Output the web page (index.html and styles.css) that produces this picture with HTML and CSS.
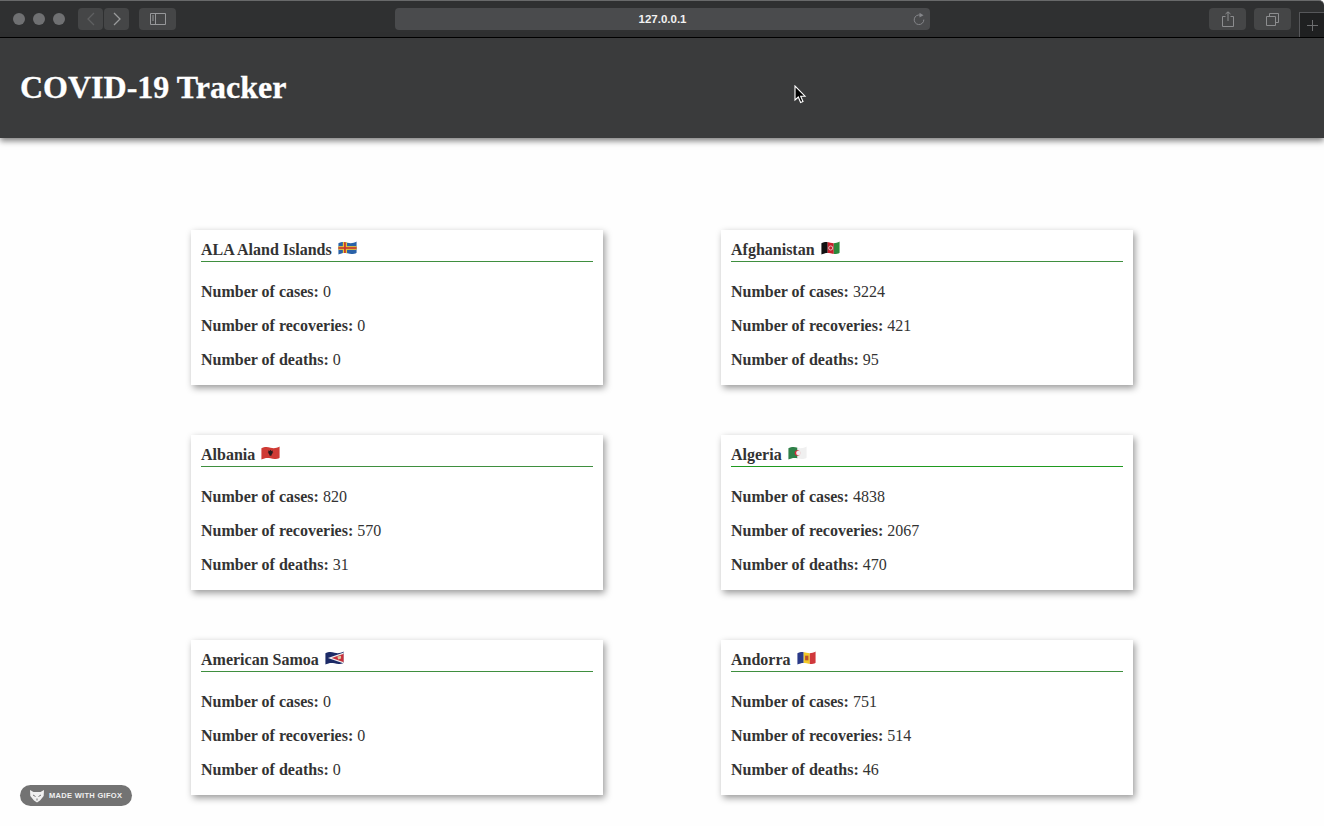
FILE: index.html
```html
<!DOCTYPE html>
<html lang="en">
<head>
<meta charset="UTF-8">
<meta name="viewport" content="width=device-width, initial-scale=1.0">
<title>COVID-19 Tracker</title>
<link rel="stylesheet" href="styles.css">
</head>
<body>
  <svg class="defs" width="0" height="0">
    <clipPath id="wave">
      <path d="M0 2.500C4 .5 7 1 10 1.800S16 2.600 20 .5V12.500C16 14.600 13 14 10 13.200S4 12.500 0 14.500Z"/>
    </clipPath>
  </svg>

  <div class="toolbar">
    <div class="lights">
      <span class="light"></span>
      <span class="light"></span>
      <span class="light"></span>
    </div>
    <div class="nav-btns">
      <span class="btn btn-nav">
        <svg width="10" height="14" viewBox="0 0 10 14"><path d="M8 1L2 7l6 6" fill="none" stroke="#5f6061" stroke-width="1.3"/></svg>
      </span>
      <span class="btn btn-nav">
        <svg width="10" height="14" viewBox="0 0 10 14"><path d="M2 1l6 6-6 6" fill="none" stroke="#9a9b9c" stroke-width="1.3"/></svg>
      </span>
    </div>
    <span class="btn btn-wide">
      <svg width="16" height="12" viewBox="0 0 16 12"><path d="M.5.5h15v11H.5zM5.5.5v11" fill="none" stroke="#97989a"/><path d="M2 3h2M2 5h2M2 7h2" stroke="#97989a"/></svg>
    </span>
    <div class="address">
      <span class="address-text">127.0.0.1</span>
      <svg class="reload" width="12" height="14" viewBox="0 0 12 14"><path d="M7.5 3.2A4.8 4.8 0 1 0 10.8 7.6" fill="none" stroke="#85868a"/><path d="M6.5 .8l4 2.4-4 2.2z" fill="#85868a"/></svg>
    </div>
    <div class="right-btns">
      <span class="btn btn-wide">
        <svg width="12" height="16" viewBox="0 0 12 16"><path d="M3.5 5.5H.5v10h11v-10h-3M6 10V1M3.500 3L6 .8 8.500 3" fill="none" stroke="#8c8d8f"/></svg>
      </span>
      <span class="btn btn-wide">
        <svg width="13" height="13" viewBox="0 0 13 13"><path d="M.5 3.500h9v9h-9zM3.500 3.500v-3h9v9h-3" fill="none" stroke="#8c8d8f"/></svg>
      </span>
    </div>
    <div class="new-tab">
      <svg width="11" height="11" viewBox="0 0 11 11"><path d="M5.500 0v11M0 5.500h11" stroke="#6d6e70"/></svg>
    </div>
  </div>

  <header class="site-header">
    <h1>COVID-19 Tracker</h1>
  </header>

  <svg class="cursor" width="13" height="20" viewBox="0 0 13 20">
    <path d="M1 1v14l3.300-3 2.300 5.500 2.400-1-2.300-5.300H11Z" fill="#000" stroke="#fff" stroke-width="1.100"/>
  </svg>

  <main class="cards">
    <div class="card">
      <h3>ALA Aland Islands
        <svg class="flag" viewBox="0 0 20 15"><g clip-path="url(#wave)"><rect width="20" height="15" fill="#2a62a8"/><rect x="5" width="4.500" height="15" fill="#e8c63c"/><rect y="5.500" width="20" height="4" fill="#e8c63c"/><rect x="6.300" width="1.900" height="15" fill="#c8382e"/><rect y="6.600" width="20" height="1.800" fill="#c8382e"/></g></svg>
      </h3>
      <p><b>Number of cases:</b> 0</p>
      <p><b>Number of recoveries:</b> 0</p>
      <p><b>Number of deaths:</b> 0</p>
    </div>
    <div class="card">
      <h3>Afghanistan
        <svg class="flag" viewBox="0 0 20 15"><g clip-path="url(#wave)"><rect width="7" height="15" fill="#111"/><rect x="7" width="6.500" height="15" fill="#c8202c"/><rect x="13.500" width="6.500" height="15" fill="#2c8a3c"/><circle cx="10.200" cy="7.500" r="2.200" fill="none" stroke="#eee" stroke-width=".8"/></g></svg>
      </h3>
      <p><b>Number of cases:</b> 3224</p>
      <p><b>Number of recoveries:</b> 421</p>
      <p><b>Number of deaths:</b> 95</p>
    </div>
    <div class="card">
      <h3>Albania
        <svg class="flag" viewBox="0 0 20 15"><g clip-path="url(#wave)"><rect width="20" height="15" fill="#cf3a34"/><path d="M10 4l1 1.300 1.800-.6-.8 1.900 1 .7-1.400 1-.7 2.200H9.100l-.7-2.200-1.400-1 1-.7-.8-1.900 1.800.6Z" fill="#2a1c1e"/></g></svg>
      </h3>
      <p><b>Number of cases:</b> 820</p>
      <p><b>Number of recoveries:</b> 570</p>
      <p><b>Number of deaths:</b> 31</p>
    </div>
    <div class="card">
      <h3 class="line-bright">Algeria
        <svg class="flag" viewBox="0 0 20 15"><g clip-path="url(#wave)"><rect width="10" height="15" fill="#2f8048"/><rect x="10" width="10" height="15" fill="#f0f0f0"/><circle cx="10" cy="7.500" r="3" fill="#d8283a"/><circle cx="11" cy="7.500" r="2.500" fill="#f0f0f0"/></g></svg>
      </h3>
      <p><b>Number of cases:</b> 4838</p>
      <p><b>Number of recoveries:</b> 2067</p>
      <p><b>Number of deaths:</b> 470</p>
    </div>
    <div class="card">
      <h3>American Samoa
        <svg class="flag" viewBox="0 0 20 15"><g clip-path="url(#wave)"><rect width="20" height="15" fill="#1c2a66"/><path d="M20 1.500V13.500L3 7.500Z" fill="#f0f0f0"/><path d="M20 3V12L7 7.500Z" fill="#c8303c"/><path d="M13 6l4-1v3l-3 1Z" fill="#d8c8a0"/></g></svg>
      </h3>
      <p><b>Number of cases:</b> 0</p>
      <p><b>Number of recoveries:</b> 0</p>
      <p><b>Number of deaths:</b> 0</p>
    </div>
    <div class="card">
      <h3>Andorra
        <svg class="flag" viewBox="0 0 20 15"><g clip-path="url(#wave)"><rect width="7" height="15" fill="#2a3a88"/><rect x="7" width="6.500" height="15" fill="#f0c828"/><rect x="13.500" width="6.500" height="15" fill="#d0383c"/><rect x="8.500" y="5" width="3.500" height="5" fill="#b8502c"/></g></svg>
      </h3>
      <p><b>Number of cases:</b> 751</p>
      <p><b>Number of recoveries:</b> 514</p>
      <p><b>Number of deaths:</b> 46</p>
    </div>
  </main>

  <div class="badge">
    <svg width="16" height="14" viewBox="0 0 16 14"><path d="M1 1l3.500 2h7L15 1l-.3 6L11 11.500 8 13.500 5 11.500 1.300 7Z" fill="#f0f0f0"/><path d="M4 6l2.500 1.500M12 6L9.500 7.500M8 9.500v2" fill="none" stroke="#737373"/></svg>
    <span>MADE WITH GIFOX</span>
  </div>
</body>
</html>
```

FILE: styles.css
```css
html, body {
  height: 100%;
}

body {
  position: relative;
  margin: 0;
  overflow: hidden;
  background-color: #fefefe;
  color: #333;
  font-family: 'Liberation Serif', serif;
  font-size: 16px;
}

.defs {
  position: absolute;
}

/* browser bar */
.toolbar {
  display: flex;
  align-items: flex-start;
  box-sizing: border-box;
  height: 38px;
  padding-top: 7px;
  background-color: #2f3031;
  border-top: 1px solid #68696a;
  border-bottom: 1px solid #000;
  border-top-right-radius: 5px;
}

.toolbar > * {
  flex: none;
}

.lights {
  display: flex;
  gap: 8px;
  margin: 5px 0 0 13px;
}

.light {
  width: 12px;
  height: 12px;
  border-radius: 50%;
  background-color: #6f7072;
}

.nav-btns {
  display: flex;
  gap: 1px;
  margin-left: 13px;
}

.btn {
  display: flex;
  align-items: center;
  justify-content: center;
  height: 22px;
  border-radius: 4px;
  background-color: #454647;
}

.btn-nav {
  width: 25px;
}

.btn-wide {
  width: 37px;
}

.nav-btns + .btn {
  margin-left: 10px;
}

.address {
  position: relative;
  display: flex;
  align-items: center;
  justify-content: center;
  width: 535px;
  height: 22px;
  margin-left: 219px;
  border-radius: 4px;
  background-color: #4a4b4d;
}

.address-text {
  color: #f2f2f2;
  font-family: 'Liberation Sans', sans-serif;
  font-size: 11.500px;
  font-weight: bold;
}

.reload {
  position: absolute;
  right: 5px;
  top: 4px;
}

.right-btns {
  display: flex;
  gap: 8px;
  margin-left: 279px;
}

.new-tab {
  display: flex;
  align-items: center;
  justify-content: center;
  box-sizing: border-box;
  width: 25px;
  height: 25px;
  margin: 4px 0 0 8px;
  background-color: #1f2021;
  border-top: 1px solid #56575a;
  border-left: 1px solid #56575a;
}

/* page */
.site-header {
  display: flex;
  align-items: center;
  box-sizing: border-box;
  height: 100px;
  padding: 0 0 2px 20px;
  background-color: #3a3b3c;
  box-shadow: 0 3px 6px rgba(0, 0, 0, 0.5);
}

.site-header h1 {
  margin: 0;
  color: #fff;
  font-size: 32px;
  -webkit-text-stroke: 0.3px #fff;
}

.cursor {
  position: absolute;
  left: 794px;
  top: 85px;
}

.cards {
  display: grid;
  grid-template-columns: 412px 412px;
  column-gap: 118px;
  row-gap: 50px;
  justify-content: center;
  padding-top: 92px;
}

.card {
  box-sizing: border-box;
  height: 155px;
  padding: 10px 10px 0;
  background-color: #fff;
  box-shadow: 2px 3px 7px rgba(0, 0, 0, 0.4);
}

.card h3 {
  height: 21px;
  margin: 0 0 21px;
  border-bottom: 1px solid #3f8f3f;
  font-size: 16px;
  line-height: 19px;
}

.card h3.line-bright {
  border-bottom-color: #1f9a1f;
}

.card p {
  margin: 0 0 16px;
  line-height: 18px;
}

.flag {
  width: 19px;
  height: 14px;
  margin-left: 2px;
  vertical-align: 0;
}

.badge {
  position: absolute;
  left: 20px;
  top: 785px;
  display: flex;
  align-items: center;
  gap: 4px;
  box-sizing: border-box;
  width: 112px;
  height: 21px;
  padding-left: 9px;
  border-radius: 11px;
  background-color: #737373;
  color: #f0f0f0;
  font-family: 'Liberation Sans', sans-serif;
  font-size: 7.500px;
  font-weight: bold;
  letter-spacing: 0.3px;
  white-space: nowrap;
}
```
